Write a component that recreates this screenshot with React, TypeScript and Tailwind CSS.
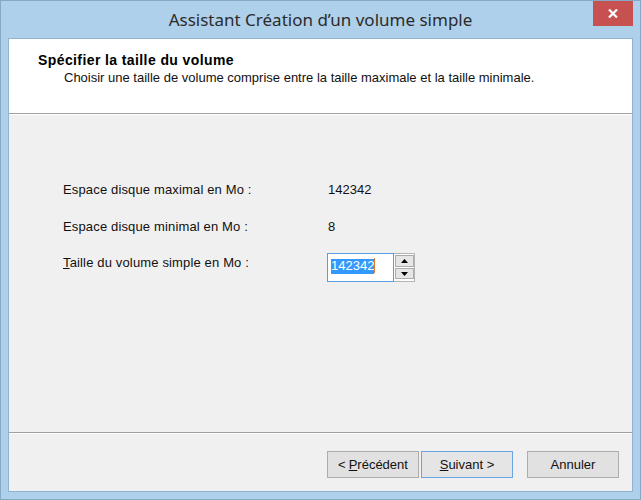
export default function App() {
  return (
    <div className="w-[641px] h-[500px] bg-[#afd0ea] border border-[#86a8c5] flex flex-col font-['Liberation_Sans',Arial,sans-serif] text-black">
      <div className="h-[37px] relative flex items-center justify-center shrink-0">
        <span className="text-[17px] text-[#2b2b2b] font-['Noto_Sans',sans-serif] mt-[1px]">
          Assistant Création d’un volume simple
        </span>
        <div className="absolute right-[7px] top-0 w-[40px] h-[25px] bg-[#c75050] flex items-center justify-center">
          <svg width="10" height="9" viewBox="0 0 10 9">
            <path d="M1 0.5 L9 8.5 M9 0.5 L1 8.5" stroke="white" strokeWidth="2.2" />
          </svg>
        </div>
      </div>
      <div className="mx-[7px] mb-[7px] border border-[#91b3d0] flex-1 flex flex-col bg-[#f0f0f0]">
        <div className="h-[74px] bg-white pl-[29px] pt-[13px] shrink-0">
          <div className="text-[14px] leading-[16px] font-bold tracking-[0.4px]">Spécifier la taille du volume</div>
          <div className="text-[13px] leading-[16px] ml-[26px] mt-[2px] text-[#111]">
            Choisir une taille de volume comprise entre la taille maximale et la taille minimale.
          </div>
        </div>
        <div className="h-[2px] border-t border-[#a0a0a0] bg-white shrink-0" />
        <div className="flex-1 pl-[54px] pt-[67px] text-[13px] leading-[16px] text-[#111]">
          <div className="flex">
            <div className="w-[265px] tracking-[0.15px]">Espace disque maximal en Mo :</div>
            <div>142342</div>
          </div>
          <div className="flex mt-[21px]">
            <div className="w-[265px] tracking-[0.15px]">Espace disque minimal en Mo :</div>
            <div>8</div>
          </div>
          <div className="flex mt-[18px] items-start">
            <div className="w-[264px] mt-[2px] tracking-[0.15px]">
              <u>T</u>aille du volume simple en Mo :
            </div>
            <div className="flex h-[29px] bg-white">
              <div className="w-[67px] h-[29px] border border-[#569de5] pl-[3px] pt-[4px]">
                <span className="inline-flex items-center h-[15px] bg-[#3399ff] text-white">142342</span>
                <span className="inline-block w-[1px] h-[15px] bg-[#e07a2c] align-top" />
              </div>
              <div className="w-[21px] h-[29px] border-y border-r border-[#b4b4b4] flex flex-col items-center pt-[1px] gap-[1px]">
                <div className="w-[19px] h-[12px] bg-[#e6e6e6] border border-[#acacac] flex items-center justify-center">
                  <svg width="7" height="4" viewBox="0 0 7 4"><path d="M3.5 0 L7 4 L0 4 Z" fill="black" /></svg>
                </div>
                <div className="w-[19px] h-[11px] bg-[#e6e6e6] border border-[#acacac] flex items-center justify-center">
                  <svg width="7" height="4" viewBox="0 0 7 4"><path d="M0 0 L7 0 L3.5 4 Z" fill="black" /></svg>
                </div>
              </div>
            </div>
          </div>
        </div>
        <div className="h-[2px] border-t border-[#a0a0a0] bg-white shrink-0" />
        <div className="h-[57px] shrink-0 flex justify-end items-start pt-[17px] pr-[13px] text-[13px] text-[#111]">
          <button className="w-[92px] h-[27px] bg-[#e1e1e1] border border-[#adadad] flex items-center justify-center">
            &lt; <u className="ml-[3px]">P</u>récédent
          </button>
          <button className="ml-[2px] w-[92px] h-[27px] bg-[#e5e5e5] border border-[#6aa5e3] flex items-center justify-center">
            <u>S</u>uivant &gt;
          </button>
          <button className="ml-[14px] w-[92px] h-[27px] bg-[#e1e1e1] border border-[#adadad] flex items-center justify-center">
            Annuler
          </button>
        </div>
      </div>
    </div>
  );
}
